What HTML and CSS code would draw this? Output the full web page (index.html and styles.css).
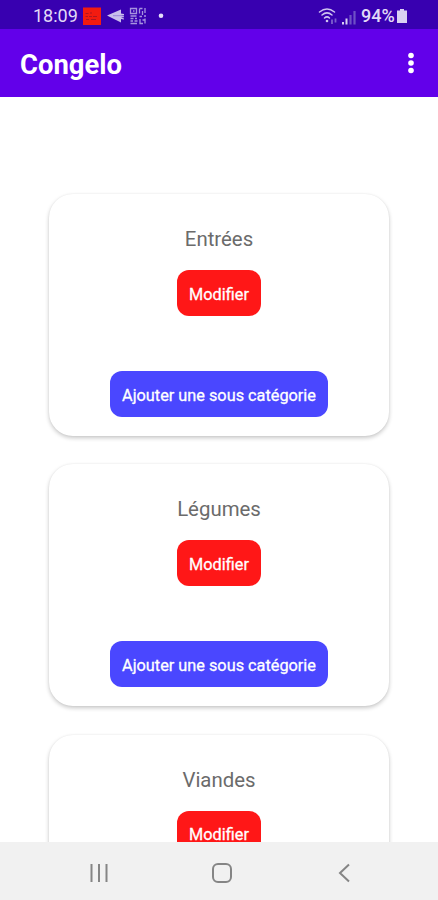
FILE: index.html
```html
<!DOCTYPE html>
<html lang="fr">
<head>
  <meta charset="UTF-8">
  <meta name="viewport" content="width=device-width, initial-scale=1.0">
  <title>Congelo</title>
  <link rel="stylesheet" href="styles.css">
</head>
<body>

  <div class="status-bar">
    <span class="time">18:09</span>
    <!-- Notifications -->
    <svg class="notifications" width="84" height="20" viewBox="0 0 84 20">
      <rect x="0" y="1.500" width="18" height="17.500" fill="#f31b10"/>
      <path d="M2.500 7.500h3M7 7h2M2.500 10.500h2.500M6 10.500h3M10 10.500h4M3 13.500h3M8 13.500h5" stroke="#b01520" stroke-width="1.200"/>
      <path d="M24 9.500L38 3.500v4l3 .5v1l-3 .5 3 .7v1l-3 .3 3 1v1l-3-.5v3.500z" fill="#c9bdec"/>
      <path d="M30 9.700h11" stroke="#8f75d6" stroke-width="0.800"/>
      <g fill="none" stroke="#a793df" stroke-width="1.300">
        <path d="M47.500 2.500h6v5h-6zM50 5h1.500M47.500 10h6M47.500 12.500h3M52 12.500h2M47.500 15h2.500M51.500 15h3M47.500 17.500h6.500"/>
        <path d="M56.500 2.500v5M56.500 2.500h3M59.500 5v4M62 2v5M56.500 10.500h2.500M61 10h2M57 13v4.500h3M62 12.500v5M59.500 14h2"/>
      </g>
      <circle cx="78" cy="9.700" r="2.300" fill="#e5ddfa"/>
    </svg>
    <!-- Wifi et réseau -->
    <svg class="signals" width="40" height="20" viewBox="0 0 40 20">
      <g fill="none" stroke="#cfc4ef" stroke-width="1.500" stroke-linecap="round">
        <path d="M1.500 6Q9 0 16.500 6"/>
        <path d="M4 9Q9 4.700 14 9"/>
        <path d="M6.500 12Q9 9.700 11.500 12"/>
      </g>
      <circle cx="9" cy="15" r="1.300" fill="#cfc4ef"/>
      <path d="M14 13.500v4.500M17.500 12.500v4" stroke="#7d60cd" stroke-width="1.800"/>
      <path d="M25 16V18.500M28.500 12.500V18.500" stroke="#d8cff2" stroke-width="2"/>
      <path d="M32.500 9V18.500M36.500 5V18.500" stroke="#6e50c6" stroke-width="2.200"/>
    </svg>
    <span class="percent">94%</span>
    <svg class="battery" width="10" height="14" viewBox="0 0 10 14">
      <path d="M3 0h4v1.500h3V14H0V1.500h3z" fill="#d9d0f2"/>
    </svg>
  </div>

  <header class="app-bar">
    <h1>Congelo</h1>
    <svg class="menu" width="6" height="22" viewBox="0 0 6 22">
      <circle cx="3" cy="3.500" r="2.800"/>
      <circle cx="3" cy="11" r="2.800"/>
      <circle cx="3" cy="18.500" r="2.800"/>
    </svg>
  </header>

  <main class="categories">
    <div class="card">
      <h2>Entrées</h2>
      <button class="edit">Modifier</button>
      <button class="add">Ajouter une sous catégorie</button>
    </div>

    <div class="card">
      <h2>Légumes</h2>
      <button class="edit">Modifier</button>
      <button class="add">Ajouter une sous catégorie</button>
    </div>

    <div class="card">
      <h2>Viandes</h2>
      <button class="edit">Modifier</button>
    </div>
  </main>

  <nav class="nav-bar">
    <svg width="20" height="20" viewBox="0 0 20 20">
      <path d="M2.500 1v18M10 1v18M17.500 1v18"/>
    </svg>
    <svg width="20" height="20" viewBox="0 0 20 20">
      <rect x="1" y="1" width="18" height="18" rx="5"/>
    </svg>
    <svg width="20" height="20" viewBox="0 0 20 20">
      <path d="M15 1.500L6 10l9 8.500"/>
    </svg>
  </nav>

</body>
</html>
```
FILE: styles.css
```css
* {
  box-sizing: border-box;
}

body {
  margin: 0;
  height: 100vh;
  display: flex;
  flex-direction: column;
  overflow: hidden;
  background-color: #fff;
  font-family: Roboto, sans-serif;
}

.status-bar {
  flex: none;
  display: flex;
  align-items: center;
  height: 29px;
  padding: 3px 31px 0 33px;
  background-color: #3800b0;
  color: #e2daf7;
  font-size: 18px;
}

.time {
  width: 50px;
  margin-top: -1px;
}

.signals {
  margin-left: auto;
}

.percent {
  margin: -1px 0 0 3px;
  width: 36px;
  font-weight: 500;
}

.app-bar {
  flex: none;
  display: flex;
  justify-content: space-between;
  align-items: center;
  height: 68px;
  padding: 0 24px 0 20px;
  background-color: #6200ea;
  color: #fff;
}

.app-bar h1 {
  margin: 3px 0 0;
  font-size: 27.4px;
  font-weight: 700;
}

.menu {
  fill: #fff;
}

.categories {
  flex: 1;
  min-height: 0;
  overflow: hidden;
  display: flex;
  flex-direction: column;
  align-items: center;
  gap: 28.900px;
  padding-top: 97px;
}

.card {
  flex: none;
  display: flex;
  flex-direction: column;
  align-items: center;
  width: 340px;
  height: 241.500px;
  padding-top: 33px;
  border-radius: 24px;
  background-color: #fff;
  box-shadow: 0 2px 4px rgba(0, 0, 0, 0.22), 0 0 2px rgba(0, 0, 0, 0.05);
}

.card h2 {
  margin: 0;
  height: 43px;
  line-height: 24px;
  font-size: 20.4px;
  font-weight: 400;
  color: #6b6b6b;
}

button {
  height: 46px;
  padding: 2px 0 0;
  border: none;
  border-radius: 12px;
  color: #fff;
  font-family: inherit;
  font-size: 16.3px;
  font-weight: 400;
  -webkit-text-stroke: 0.3px #fff;
  white-space: nowrap;
}

.edit {
  width: 84px;
  background-color: #ff1717;
}

.add {
  width: 218px;
  margin-top: 55px;
  background-color: #4a47ff;
}

.nav-bar {
  flex: none;
  display: flex;
  justify-content: space-between;
  align-items: center;
  height: 58px;
  padding: 3px 84px 0 89px;
  background-color: #f1f1f1;
}

.nav-bar svg {
  fill: none;
  stroke: #858585;
  stroke-width: 2;
}
```
